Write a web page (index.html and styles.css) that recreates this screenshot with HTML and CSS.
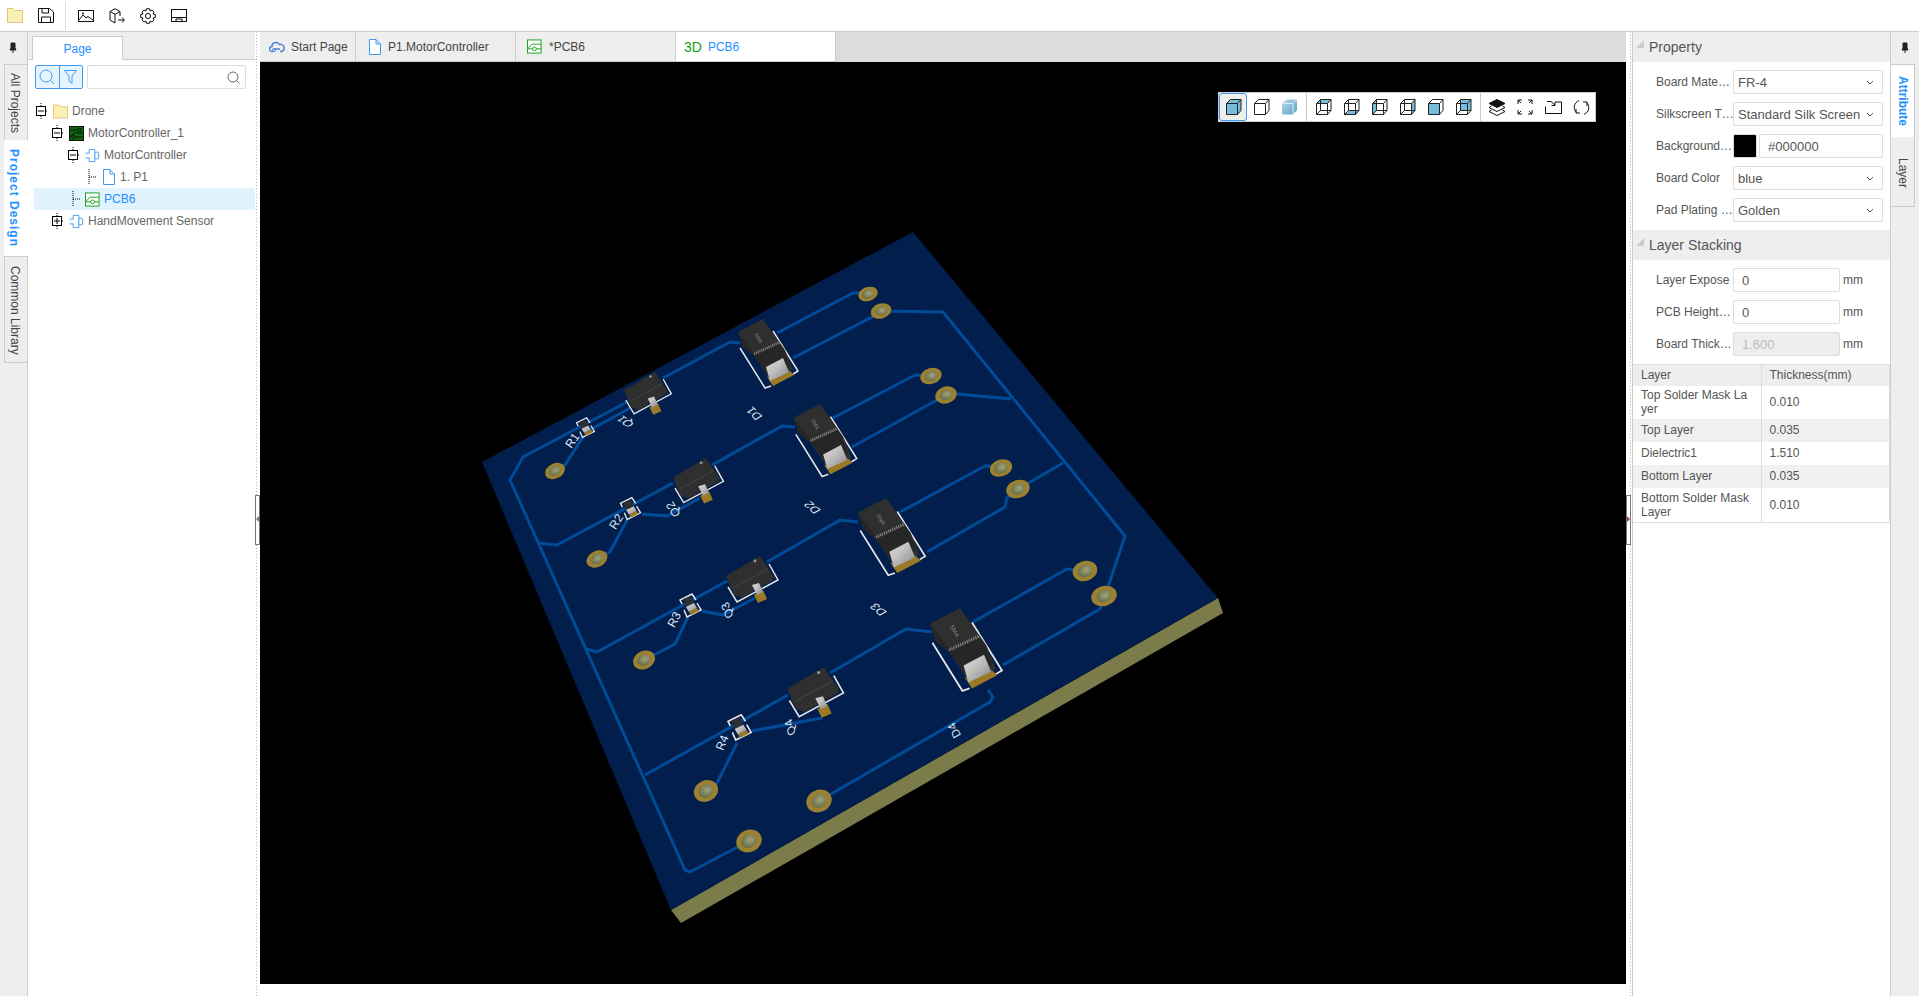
FILE: index.html
```html
<!DOCTYPE html>
<html lang="en">

<head>
    <meta charset="UTF-8">
    <title>PCB6 - 3D View</title>
    <link rel="stylesheet" href="styles.css">
</head>

<body>
    <svg class="defs" width="0" height="0">
        <defs>
            <symbol id="i-doc" viewBox="0 0 13 16">
                <path d="M1.5 .5H8L12.5 5V15.5H1.5Z M8 .5V5H12.5" fill="#fff" stroke="#3f9bf2"/>
            </symbol>
            <symbol id="i-chip" viewBox="0 0 16 16">
                <path d="M4.5 5.5V1.5H10.5V14.5H4.5V10.5M.5 5.5H4.5M.5 10.5H4.5" fill="none" stroke="#3f9bf2"/>
                <rect x="10.5" y="4.5" width="4" height="7" rx="1" fill="#fff" stroke="#3f9bf2"/>
            </symbol>
            <symbol id="i-pcb" viewBox="0 0 16 16">
                <rect x=".5" y="1" width="14.5" height="14" fill="#fff" stroke="#12a012"/>
                <path d="M1 10L5.5 5.5H15M1 10.5H6M10 10.5H15" fill="none" stroke="#12a012"/>
                <circle cx="8" cy="10.5" r="2" fill="none" stroke="#12a012"/>
            </symbol>
            <symbol id="i-folder" viewBox="0 0 16 15">
                <path d="M.5 14.5V.5H6L8 2.5H15.5V14.5Z" fill="#faf0b4" stroke="#dfc477"/>
            </symbol>
            <symbol id="i-minus" viewBox="0 0 14 16">
                <path d="M7 0V3M7 13V16M12 8H14" stroke="#000" stroke-dasharray="1 1" fill="none"/>
                <rect x="2.5" y="3.5" width="9" height="9" fill="#fff" stroke="#000"/>
                <path d="M4 8H10" stroke="#000"/>
            </symbol>
            <symbol id="i-plus" viewBox="0 0 14 16">
                <path d="M7 0V3M7 13V16M12 8H14" stroke="#000" stroke-dasharray="1 1" fill="none"/>
                <rect x="2.5" y="3.5" width="9" height="9" fill="#fff" stroke="#000"/>
                <path d="M4 8H10M7 5V11" stroke="#000"/>
            </symbol>
            <symbol id="i-leaf" viewBox="0 0 14 16">
                <path d="M7 0V16M7 8H14" stroke="#000" stroke-dasharray="1 1" fill="none"/>
            </symbol>
            <symbol id="i-pin" viewBox="0 0 10 12">
                <path d="M3 1H7V6L8 8H2L3 6ZM5 8V11" fill="#222" stroke="#222"/>
            </symbol>
            <symbol id="i-chevron" viewBox="0 0 8 5">
                <path d="M1 1L4 4L7 1" fill="none" stroke="#555"/>
            </symbol>
            <symbol id="i-wire" viewBox="0 0 17 16">
                <path d="M1.5 4.5H12.5V15.5H1.5ZM5.5 .5H16V11.5H12.5M1.5 4.5L5.5 .5V11.5H12.5M12.5 4.5L16 .5M1.5 15.5L5.5 11.5M12.5 15.5L16 11.5" fill="none" stroke="#222"/>
            </symbol>
            <symbol id="i-solid" viewBox="0 0 17 16">
                <path d="M1.5 4.5H12.5V15.5H1.5ZM1.5 4.5L5.5 .5H16V11.5L12.5 15.5M12.5 4.5L16 .5" fill="none" stroke="#222"/>
            </symbol>

            <linearGradient id="g-cube" x1="0" y1="0" x2="1" y2="1">
                <stop offset="0" stop-color="#b7dced"/>
                <stop offset="1" stop-color="#5c9fc2"/>
            </linearGradient>
            <radialGradient id="g-hole" cx=".6" cy=".45" r=".7">
                <stop offset="0" stop-color="#a3a47a"/>
                <stop offset="1" stop-color="#5c6440"/>
            </radialGradient>
            <linearGradient id="g-lead" x1="0" y1="0" x2="1" y2="1">
                <stop offset="0" stop-color="#d8d8d8"/>
                <stop offset=".4" stop-color="#c4c4c4"/>
                <stop offset="1" stop-color="#858585"/>
            </linearGradient>

            <g id="part-d">
                <path class="silk" d="M-23 29L2 69L8 67M10 12L35 52L30 55"/>
                <polygon class="gold" points="4,58 26,51 31,56 10,67"/>
                <polygon class="body" points="-25,13 0,0 22,31 30,51 6,59 2,53 -8,38 -20,28"/>
                <polygon class="body-dark" points="-25,13 -9,34 -4,44 2,53 -8,38 -20,28"/>
                <polygon class="body-dark" points="-9,37 17,25 21,31 27,47 6,57 -4,44"/>
                <path class="stripe" d="M-9 35L17 23"/>
                <polygon points="3,48 20,39 26,53 7,62" fill="url(#g-lead)"/>
                <text class="mark" transform="translate(-6 20) rotate(60)">SMA</text>
            </g>
            <g id="part-q">
                <path class="silk" d="M-32 31L-23 46L18 24L9 8"/>
                <polygon class="body" points="-34,20 0,0 14,21 13,24 -18,42 -27,38"/>
                <path class="ridge" d="M-27 32L8 13"/>
                <circle cx="-5" cy="5" r="1.4" fill="#999"/>
                <polygon class="gold" points="-6,39 3,34 7,43 -2,47"/>
                <polygon points="-8,29 -1,27 3,36 -3,39" fill="url(#g-lead)"/>
            </g>
            <g id="part-r">
                <path class="silk" d="M-8 -2L-10 -6L2 -12L6 -6M-6 4L-3 11L11 4L7 -3"/>
                <polygon class="body" points="-7,-7 1,-9 4,-3 -4,1"/>
                <polygon points="-4,1 4,-3 7,2 -1,6" fill="url(#g-lead)"/>
                <polygon class="gold" points="-1,6 7,2 9,5 1,9"/>
            </g>
        </defs>
    </svg>

    <header class="topbar">
        <svg class="top-icon" width="16" height="15"><use href="#i-folder"/></svg>
        <svg class="top-icon" width="16" height="15" viewBox="0 0 16 15">
            <path d="M.5 .5H11.5L15.5 4V14.5H.5ZM4 .5V5H10.5V.5M3.5 14.5V9H12.5V14.5" fill="none" stroke="#111"/>
        </svg>
        <span class="top-sep"></span>
        <svg class="top-icon" width="16" height="12" viewBox="0 0 16 12">
            <rect x=".5" y=".5" width="15" height="11" fill="none" stroke="#111"/>
            <path d="M1 10L5 5L8 8L10 6.5L15 10" fill="none" stroke="#111"/>
            <circle cx="5" cy="3.5" r="1" fill="#111"/>
        </svg>
        <svg class="top-icon" width="16" height="16" viewBox="0 0 16 16">
            <path d="M1 3.5L6 .7L11 3.5V8M1 3.5V12L6 15V6.3L1 3.5M6 6.3L11 3.5M9 12H15M13 9.5L15.5 12L13 14.5" fill="none" stroke="#111"/>
        </svg>
        <svg class="top-icon" width="16" height="16" viewBox="0 0 16 16">
            <path d="M6.5 .7H9.5L10 3L12 2L14 4L13 6L15.3 6.5V9.5L13 10L14 12L12 14L10 13L9.5 15.3H6.5L6 13L4 14L2 12L3 10L.7 9.5V6.5L3 6L2 4L4 2L6 3Z" fill="none" stroke="#111"/>
            <circle cx="8" cy="8" r="2.6" fill="none" stroke="#111"/>
        </svg>
        <svg class="top-icon" width="16" height="13" viewBox="0 0 16 13">
            <rect x=".5" y=".5" width="15" height="12" fill="none" stroke="#111"/>
            <path d="M1 8.5H15M5 12V10H11V12" fill="none" stroke="#111"/>
        </svg>
    </header>

    <div class="main">
        <aside class="rail">
            <div class="pin"><svg width="10" height="12"><use href="#i-pin"/></svg></div>
            <div class="rail-tab all-tab">All Projects</div>
            <div class="rail-tab active design-tab">Project Design</div>
            <div class="rail-tab common-tab">Common Library</div>
        </aside>

        <section class="project">
            <div class="page-tabs">
                <div class="page-tab">Page</div>
            </div>
            <div class="search-row">
                <div class="search-btns">
                    <span class="search-btn">
                        <svg width="16" height="16" viewBox="0 0 16 16">
                            <circle cx="7" cy="7" r="6" fill="none" stroke="#3f9bf2"/>
                            <path d="M11.5 11.5L15 15" stroke="#3f9bf2"/>
                        </svg>
                    </span>
                    <span class="search-btn">
                        <svg width="13" height="14" viewBox="0 0 13 14">
                            <path d="M.5 .5H12.5L8 6V13.5L5 11V6Z" fill="none" stroke="#3f9bf2"/>
                        </svg>
                    </span>
                </div>
                <div class="search-box">
                    <svg width="13" height="13" viewBox="0 0 13 13">
                        <circle cx="6" cy="6" r="5" fill="none" stroke="#666"/>
                        <path d="M9.5 9.5L12.5 12.5" stroke="#666"/>
                    </svg>
                </div>
            </div>
            <div class="tree">
                <div class="row lv0"><svg class="sw" width="14" height="16"><use href="#i-minus"/></svg><svg class="ico" width="15" height="15"><use href="#i-folder"/></svg>Drone</div>
                <div class="row lv1"><svg class="sw" width="14" height="16"><use href="#i-minus"/></svg>
                    <svg class="ico" width="15" height="15" viewBox="0 0 15 15">
                        <rect x=".5" y=".5" width="14" height="14" fill="#0b6b0b" stroke="#111"/>
                        <path d="M1 4H9M6 11H14M1 11L5 7H14" fill="none" stroke="#111"/>
                        <circle cx="10.5" cy="4" r="1.7" fill="none" stroke="#111"/>
                        <circle cx="4.5" cy="11" r="1.7" fill="none" stroke="#111"/>
                    </svg>MotorController_1</div>
                <div class="row lv2"><svg class="sw" width="14" height="16"><use href="#i-minus"/></svg><svg class="ico" width="15" height="15"><use href="#i-chip"/></svg>MotorController</div>
                <div class="row lv3"><svg class="sw" width="14" height="16"><use href="#i-leaf"/></svg><svg class="ico" width="15" height="16"><use href="#i-doc"/></svg>1. P1</div>
                <div class="row lv2 selected"><svg class="sw" width="14" height="16"><use href="#i-leaf"/></svg><svg class="ico" width="15" height="15"><use href="#i-pcb"/></svg>PCB6</div>
                <div class="row lv1"><svg class="sw" width="14" height="16"><use href="#i-plus"/></svg><svg class="ico" width="15" height="15"><use href="#i-chip"/></svg>HandMovement Sensor</div>
            </div>
        </section>

        <div class="splitter"><span class="handle left-handle"></span></div>

        <section class="center">
            <nav class="doc-tabs">
                <div class="doc-tab tab-start">
                    <svg width="16" height="12" viewBox="0 0 16 12">
                        <path d="M4 10.5H3A2.5 2.5 0 0 1 3 5.5A4 4 0 0 1 10.5 3.5A3.5 3.5 0 0 1 12.5 10.5H11M5 8H11" fill="none" stroke="#4d7fe0" stroke-width="1.5"/>
                        <circle cx="5" cy="9" r="1.5" fill="none" stroke="#4d7fe0"/>
                    </svg>Start Page</div>
                <div class="doc-tab tab-sch"><svg width="13" height="16"><use href="#i-doc"/></svg>P1.MotorController</div>
                <div class="doc-tab tab-pcb"><svg width="15" height="15"><use href="#i-pcb"/></svg>*PCB6</div>
                <div class="doc-tab tab-3d active"><span class="badge-3d">3D</span>PCB6</div>
            </nav>
            <div class="canvas">
                <svg class="scene" viewBox="260 62 1366 922" width="1366" height="922">
                    <polygon class="board-side" points="671,910 1218,598 1223,613 681,923"/>
                    <polygon class="board-top" points="913,232 1218,598 671,910 482,462"/>

                    <g class="traces">
                        <polyline points="868,293 853,293 777,333"/>
                        <polyline points="881,311 872,317 793,358"/>
                        <polyline points="881,311 943,312 1125,536 1107,590"/>
                        <polyline points="740,343 730,342 663,378"/>
                        <polyline points="627,402 523,457 510,480 685,870 690,872 749,841"/>
                        <polyline points="630,408 590,430"/>
                        <polyline points="583,437 565,465 555,471"/>
                        <polyline points="795,427 782,426 712,465"/>
                        <polyline points="673,483 557,545 538,543"/>
                        <polyline points="700,498 667,516 642,514"/>
                        <polyline points="627,520 610,552 597,559"/>
                        <polyline points="931,376 915,375 833,418"/>
                        <polyline points="946,395 852,447"/>
                        <polyline points="946,393 1011,399"/>
                        <polyline points="1001,467 985,466 900,512"/>
                        <polyline points="1018,489 1007,498 1005,507 927,552"/>
                        <polyline points="1018,489 1063,463"/>
                        <polyline points="858,522 840,520 767,562"/>
                        <polyline points="727,581 597,652 586,649"/>
                        <polyline points="755,598 723,615 702,611"/>
                        <polyline points="688,617 675,644 644,660"/>
                        <polyline points="1085,571 1067,569 973,622"/>
                        <polyline points="1104,596 1100,609 1003,665"/>
                        <polyline points="932,632 906,629 830,673"/>
                        <polyline points="788,695 645,775"/>
                        <polyline points="988,690 993,697 990,702 819,801"/>
                        <polyline points="822,718 752,731"/>
                        <polyline points="737,743 717,783 706,791"/>
                    </g>

                    <g class="labels">
                        <text transform="translate(573 441) rotate(-55)">R1</text>
                        <text transform="translate(617 522) rotate(-58)">R2</text>
                        <text transform="translate(675 620) rotate(-62)">R3</text>
                        <text transform="translate(723 743) rotate(-68)">R4</text>
                        <text transform="matrix(-.8 -.55 .85 -.5 626 421)">Q1</text>
                        <text transform="matrix(-.55 -.83 .85 -.5 674 509)">Q2</text>
                        <text transform="matrix(-.37 -.93 .85 -.5 728 610)">Q3</text>
                        <text transform="matrix(-.3 -.95 .85 -.5 791 727)">Q4</text>
                        <text transform="matrix(-.7 -.7 .85 -.5 755 413)">D1</text>
                        <text transform="matrix(-.75 -.62 .85 -.5 813 507)">D2</text>
                        <text transform="matrix(-.75 -.62 .85 -.5 879 609)">D3</text>
                        <text transform="matrix(-.45 -.89 .85 -.5 955 730)">D4</text>
                    </g>

                    <g class="pads">
                        <g transform="translate(868 294) rotate(-18)"><ellipse rx="10" ry="7"/><ellipse class="hole" rx="6" ry="4.5"/></g>
                        <g transform="translate(881 311) rotate(-18)"><ellipse rx="10.5" ry="7.5"/><ellipse class="hole" rx="6" ry="4.5"/></g>
                        <g transform="translate(931 376) rotate(-18)"><ellipse rx="11" ry="8"/><ellipse class="hole" rx="6.5" ry="5"/></g>
                        <g transform="translate(946 395) rotate(-18)"><ellipse rx="11" ry="8.5"/><ellipse class="hole" rx="6.5" ry="5"/></g>
                        <g transform="translate(1001 468) rotate(-18)"><ellipse rx="11.5" ry="8.5"/><ellipse class="hole" rx="7" ry="5.5"/></g>
                        <g transform="translate(1018 489) rotate(-18)"><ellipse rx="12" ry="9"/><ellipse class="hole" rx="7" ry="5.5"/></g>
                        <g transform="translate(1085 571) rotate(-18)"><ellipse rx="12.5" ry="10"/><ellipse class="hole" rx="7.5" ry="6"/></g>
                        <g transform="translate(1104 596) rotate(-18)"><ellipse rx="13" ry="10"/><ellipse class="hole" rx="7.5" ry="6"/></g>
                        <g transform="translate(555 471) rotate(-25)"><ellipse rx="10.5" ry="7.5"/><ellipse class="hole" rx="6.5" ry="4.5"/></g>
                        <g transform="translate(597 559) rotate(-25)"><ellipse rx="11" ry="8"/><ellipse class="hole" rx="6.5" ry="5"/></g>
                        <g transform="translate(644 660) rotate(-25)"><ellipse rx="11.5" ry="9"/><ellipse class="hole" rx="7" ry="5.5"/></g>
                        <g transform="translate(706 791) rotate(-25)"><ellipse rx="12.5" ry="10.5"/><ellipse class="hole" rx="7.5" ry="6.5"/></g>
                        <g transform="translate(819 801) rotate(-25)"><ellipse rx="13" ry="11"/><ellipse class="hole" rx="8" ry="6.5"/></g>
                        <g transform="translate(749 841) rotate(-25)"><ellipse rx="13" ry="11"/><ellipse class="hole" rx="8" ry="6.5"/></g>
                    </g>

                    <use href="#part-r" transform="translate(585 428) scale(.85)"/>
                    <use href="#part-r" transform="translate(630 509) scale(.95)"/>
                    <use href="#part-r" transform="translate(690 606)"/>
                    <use href="#part-r" transform="translate(739 728) scale(1.1)"/>
                    <use href="#part-q" transform="translate(655 372) scale(.91)"/>
                    <use href="#part-q" transform="translate(706 458) scale(.97)"/>
                    <use href="#part-q" transform="translate(760 556)"/>
                    <use href="#part-q" transform="translate(824 667) scale(1.08)"/>
                    <use href="#part-d" transform="translate(763 319)"/>
                    <use href="#part-d" transform="translate(820 404) scale(1.05)"/>
                    <use href="#part-d" transform="translate(886 498) scale(1.12)"/>
                    <use href="#part-d" transform="translate(960 608) scale(1.2)"/>
                </svg>

                <div class="view-tools">
                    <span class="tool selected"><svg width="17" height="16" viewBox="0 0 17 16"><polygon class="shade" points="1.5,4.5 5.5,.5 16,.5 16,11.5 12.5,15.5 1.5,15.5"/><use href="#i-solid" width="17" height="16"/></svg></span>
                    <span class="tool"><svg width="17" height="16"><use href="#i-solid"/></svg></span>
                    <span class="tool">
                        <svg width="17" height="16" viewBox="0 0 17 16">
                            <path d="M1 4.5L5.5 .5H16V11L12 15.5H1Z" fill="url(#g-cube)"/>
                            <path d="M1 4.5H12V15.5M12 4.5L16 .5" fill="none" stroke="#d8edf6"/>
                        </svg>
                    </span>
                    <span class="tool-sep"></span>
                    <span class="tool"><svg width="17" height="16" viewBox="0 0 17 16"><polygon class="shade" points="1.5,4.5 5.5,.5 16,.5 12.5,4.5"/><use href="#i-wire" width="17" height="16"/></svg></span>
                    <span class="tool"><svg width="17" height="16" viewBox="0 0 17 16"><polygon class="shade" points="1.5,15.5 5.5,11.5 16,11.5 12.5,15.5"/><use href="#i-wire" width="17" height="16"/></svg></span>
                    <span class="tool"><svg width="17" height="16" viewBox="0 0 17 16"><polygon class="shade" points="1.5,4.5 5.5,.5 5.5,11.5 1.5,15.5"/><use href="#i-wire" width="17" height="16"/></svg></span>
                    <span class="tool"><svg width="17" height="16" viewBox="0 0 17 16"><polygon class="shade" points="12.5,4.5 16,.5 16,11.5 12.5,15.5"/><use href="#i-wire" width="17" height="16"/></svg></span>
                    <span class="tool"><svg width="17" height="16" viewBox="0 0 17 16"><rect class="shade" x="1.5" y="4.5" width="11" height="11"/><use href="#i-solid" width="17" height="16"/></svg></span>
                    <span class="tool"><svg width="17" height="16" viewBox="0 0 17 16"><rect class="shade" x="5.5" y=".5" width="10.5" height="11"/><use href="#i-wire" width="17" height="16"/></svg></span>
                    <span class="tool-sep"></span>
                    <span class="tool">
                        <svg width="18" height="17" viewBox="0 0 18 17">
                            <path d="M9 .5L17 4.5L9 8.5L1 4.5Z" fill="#111" stroke="#111"/>
                            <path d="M3.5 7L1 8.5L9 12.5L17 8.5L14.5 7M3.5 11L1 12.5L9 16.5L17 12.5L14.5 11" fill="none" stroke="#111"/>
                        </svg>
                    </span>
                    <span class="tool">
                        <svg width="16" height="16" viewBox="0 0 16 16">
                            <path d="M1 5V1H5M11 1H15V5M15 11V15H11M5 15H1V11M1 1L4 4M15 1L12 4M15 15L12 12M1 15L4 12" fill="none" stroke="#111"/>
                        </svg>
                    </span>
                    <span class="tool">
                        <svg width="17" height="14" viewBox="0 0 17 14">
                            <path d="M.5 6.5V13.5H16.5V2H10M2 1.5H6L10 5M10 2V5.5H6.5" fill="none" stroke="#111"/>
                        </svg>
                    </span>
                    <span class="tool">
                        <svg width="17" height="17" viewBox="0 0 17 17">
                            <path d="M6 1.7A7 7 0 0 0 3.5 13.5M11 15.3A7 7 0 0 0 13.5 3.5M3 10V14H7M14 7V3H10" fill="none" stroke="#111"/>
                        </svg>
                    </span>
                </div>
            </div>
        </section>

        <div class="splitter right"><span class="handle right-handle"></span></div>

        <section class="props">
            <h3 class="section"><span class="caret"></span>Property</h3>
            <div class="form">
                <div class="field"><label>Board Mate…</label><div class="select">FR-4<svg width="8" height="5"><use href="#i-chevron"/></svg></div></div>
                <div class="field"><label>Silkscreen T…</label><div class="select">Standard Silk Screen<svg width="8" height="5"><use href="#i-chevron"/></svg></div></div>
                <div class="field"><label>Background…</label><span class="swatch"></span><input class="text hex" type="text" value="#000000"></div>
                <div class="field"><label>Board Color</label><div class="select">blue<svg width="8" height="5"><use href="#i-chevron"/></svg></div></div>
                <div class="field"><label>Pad Plating …</label><div class="select">Golden<svg width="8" height="5"><use href="#i-chevron"/></svg></div></div>
            </div>
            <h3 class="section"><span class="caret"></span>Layer Stacking</h3>
            <div class="form">
                <div class="field"><label>Layer Expose</label><input class="text num" type="text" value="0"><span class="unit">mm</span></div>
                <div class="field"><label>PCB Height…</label><input class="text num" type="text" value="0"><span class="unit">mm</span></div>
                <div class="field"><label>Board Thick…</label><input class="text num" type="text" value="1.600" disabled><span class="unit">mm</span></div>
            </div>
            <table class="layers">
                <thead>
                    <tr><th>Layer</th><th>Thickness(mm)</th></tr>
                </thead>
                <tbody>
                    <tr class="tall"><td>Top Solder Mask Layer</td><td>0.010</td></tr>
                    <tr class="alt"><td>Top Layer</td><td>0.035</td></tr>
                    <tr><td>Dielectric1</td><td>1.510</td></tr>
                    <tr class="alt"><td>Bottom Layer</td><td>0.035</td></tr>
                    <tr class="tall last"><td>Bottom Solder Mask Layer</td><td>0.010</td></tr>
                </tbody>
            </table>
        </section>

        <aside class="rail-right">
            <div class="pin"><svg width="10" height="12"><use href="#i-pin"/></svg></div>
            <div class="side-tab active attr-tab">Attribute</div>
            <div class="side-tab layer-tab">Layer</div>
        </aside>
    </div>
</body>

</html>
```

FILE: styles.css
```css
* {
    box-sizing: border-box;
}

html,
body {
    margin: 0;
    height: 100%;
    overflow: hidden;
}

body {
    font-family: "Liberation Sans", Arial, sans-serif;
    font-size: 12px;
    color: #555;
    background-color: #fff;
    display: flex;
    flex-direction: column;
}

.defs {
    display: block;
    height: 0;
}

/* top bar */
.topbar {
    height: 32px;
    flex: none;
    display: flex;
    align-items: center;
    padding-left: 7px;
    border-bottom: 1px solid #ccc;
}

.top-icon {
    margin-right: 15px;
    flex: none;
}

.top-sep {
    width: 1px;
    height: 28px;
    background-color: #ddd;
    margin: 0 12px 0 -4px;
}

.main {
    flex: 1;
    display: flex;
    min-height: 0;
}

/* left rail */
.rail {
    width: 28px;
    flex: none;
    background-color: #eee;
    border-right: 1px solid #ccc;
    display: flex;
    flex-direction: column;
    align-items: flex-end;
}

.pin {
    height: 32px;
    width: 100%;
    display: flex;
    justify-content: center;
    align-items: center;
}

.rail .pin {
    padding-right: 2px;
}

.rail-tab {
    writing-mode: vertical-rl;
    width: 24px;
    margin-right: -1px;
    padding-right: 4px;
    border: 1px solid #ccc;
    border-right: none;
    border-bottom: none;
    color: #444;
    display: flex;
    align-items: center;
    line-height: 14px;
}

.all-tab {
    height: 76px;
    padding-top: 8px;
}

.design-tab {
    height: 116px;
    padding-top: 9px;
    letter-spacing: 1px;
}

.common-tab {
    height: 107px;
    padding-top: 9px;
    border-bottom: 1px solid #ccc;
}

.rail-tab.active {
    background-color: #fff;
    color: #1e90ff;
    font-weight: bold;
    border-left: none;
    border-top: none;
}

/* project tree */
.project {
    width: 227px;
    flex: none;
    display: flex;
    flex-direction: column;
}

.page-tabs {
    height: 28px;
    flex: none;
    background-color: #eee;
    border-bottom: 1px solid #ccc;
    padding: 4px 0 0 4px;
}

.page-tab {
    width: 91px;
    height: 24px;
    background-color: #fff;
    border: 1px solid #ccc;
    border-bottom: none;
    color: #1e90ff;
    text-align: center;
    line-height: 25px;
}

.search-row {
    display: flex;
    gap: 4px;
    padding: 5px 0 0 7px;
}

.search-btns {
    display: flex;
    width: 48px;
    height: 24px;
    border: 1px solid #3f9bf2;
    border-radius: 2px;
    background-color: #e6f4fd;
}

.search-btn {
    flex: 1;
    display: flex;
    align-items: center;
    justify-content: center;
}

.search-btn + .search-btn {
    border-left: 1px solid #3f9bf2;
}

.search-box {
    width: 159px;
    height: 24px;
    border: 1px solid #ddd;
    border-radius: 2px;
    display: flex;
    align-items: center;
    justify-content: flex-end;
    padding-right: 5px;
}

.tree {
    padding-top: 11px;
}

.row {
    height: 22px;
    margin-left: 6px;
    display: flex;
    align-items: center;
    color: #666;
    white-space: nowrap;
}

.lv1 {
    padding-left: 16px;
}

.lv2 {
    padding-left: 32px;
}

.lv3 {
    padding-left: 48px;
}

.row.selected {
    background-color: #e1f3fd;
    color: #1e90ff;
}

.sw {
    flex: none;
}

.ico {
    flex: none;
    margin: 0 4px 0 5px;
}

/* splitters */
.splitter {
    width: 5px;
    flex: none;
    position: relative;
    background-image: linear-gradient(#bbb 50%, transparent 50%);
    background-size: 1px 3px;
    background-repeat: repeat-y;
    background-position: 1px 0;
}

.splitter.right {
    width: 6px;
    background-position: 4px 0;
}

.handle {
    position: absolute;
    top: 463px;
    width: 5px;
    height: 50px;
    border: 1px solid #777;
    background-color: #fff;
}

.left-handle {
    right: 0;
}

.right-handle {
    left: 0;
}

.handle::after {
    content: "";
    position: absolute;
    top: 20px;
    left: 0;
    border: 3px solid transparent;
}

.left-handle::after {
    border-right-color: #777;
    left: -3px;
}

.right-handle::after {
    border-left-color: #8c4a4a;
}

/* center */
.center {
    flex: 1;
    min-width: 0;
    display: flex;
    flex-direction: column;
    padding-bottom: 12px;
}

.doc-tabs {
    height: 30px;
    flex: none;
    display: flex;
    background-color: #dcdcdc;
}

.doc-tab {
    width: 160px;
    display: flex;
    align-items: center;
    gap: 7px;
    padding-left: 11px;
    background-color: #eee;
    border-right: 1px solid #ccc;
    border-bottom: 1px solid #ccc;
    color: #444;
}

.tab-start {
    width: 96px;
    padding-left: 9px;
}

.tab-start svg {
    margin-right: -1px;
}

.tab-sch {
    padding-left: 12px;
}

.tab-pcb {
    padding-left: 11px;
}

.doc-tab.active {
    background-color: #fff;
    color: #1e90ff;
    padding-left: 8px;
    gap: 6px;
}

.badge-3d {
    color: #12a012;
    font-size: 14px;
}

.canvas {
    flex: 1;
    position: relative;
    background-color: #000;
    overflow: hidden;
}

.scene {
    display: block;
}

.board-top {
    fill: #011e4d;
}

.board-side {
    fill: #7c7c4b;
}

.traces polyline {
    fill: none;
    stroke: #004c98;
    stroke-width: 3;
    stroke-linejoin: round;
}

.labels text {
    fill: #dfe5ee;
    font-size: 12px;
    text-anchor: middle;
    dominant-baseline: middle;
}

.pads ellipse {
    fill: #9c8130;
}

.pads .hole {
    fill: url(#g-hole);
}

.silk {
    fill: none;
    stroke: #e6e6e6;
    stroke-width: 1.5;
}

.body {
    fill: #2f2f2f;
}

.body-dark {
    fill: #262626;
}

.gold {
    fill: #9a7a26;
}

.stripe {
    fill: none;
    stroke: #8a8a8a;
    stroke-width: 2.5;
    stroke-dasharray: 1 1;
}

.ridge {
    stroke: #444;
    fill: none;
}

.mark {
    fill: #888;
    font-size: 5px;
    text-anchor: middle;
}

/* 3d view tools */
.view-tools {
    position: absolute;
    top: 30px;
    right: 30px;
    height: 30px;
    width: 378px;
    display: flex;
    align-items: center;
    background-color: #fff;
    border: 1px solid #ccc;
}

.tool {
    width: 28px;
    height: 28px;
    display: flex;
    align-items: center;
    justify-content: center;
    flex: none;
    border: 1px solid transparent;
    border-radius: 3px;
}

.tool.selected {
    border-color: #3f9bf2;
    background-color: #eee;
}

.tool-sep {
    width: 1px;
    height: 28px;
    background-color: #ccc;
    margin: 0 2px 0 3px;
    flex: none;
}

.shade {
    fill: #78bcdc;
}

/* properties */
.props {
    width: 259px;
    flex: none;
    border-left: 1px solid #ccc;
    border-right: 1px solid #ccc;
    display: flex;
    flex-direction: column;
}

.section {
    height: 30px;
    flex: none;
    margin: 0;
    background-color: #eee;
    font-size: 14px;
    font-weight: normal;
    color: #555;
    line-height: 30px;
    padding-left: 16px;
    position: relative;
}

.caret {
    position: absolute;
    left: 3px;
    top: 8px;
    border-style: solid;
    border-width: 0 0 8px 8px;
    border-color: transparent transparent #ccc transparent;
}

.form {
    padding: 8px 0 0;
}

.field {
    height: 24px;
    margin-bottom: 8px;
    display: flex;
    align-items: center;
    padding-left: 23px;
}

.field label {
    width: 77px;
    flex: none;
    white-space: nowrap;
    overflow: hidden;
    color: #555;
    margin-top: -1px;
}

.select {
    width: 150px;
    height: 24px;
    border: 1px solid #ddd;
    border-radius: 2px;
    font-size: 13px;
    color: #555;
    padding: 0 8px 0 4px;
    display: flex;
    align-items: center;
    justify-content: space-between;
}

.swatch {
    width: 24px;
    height: 24px;
    background-color: #000;
    border: 1px solid #ddd;
    border-radius: 2px;
    flex: none;
}

.text {
    height: 24px;
    font: 13px "Liberation Sans", Arial, sans-serif;
    color: #555;
    border: 1px solid #ddd;
    border-radius: 2px;
    padding: 0 8px;
    outline: none;
}

.hex {
    width: 124px;
    margin-left: 2px;
}

.num {
    width: 107px;
}

.num:disabled {
    background-color: #eee;
    color: #bbb;
}

.unit {
    margin-left: 3px;
    color: #555;
}

.layers {
    width: 257px;
    border-collapse: collapse;
    table-layout: fixed;
    border: 1px solid #ddd;
    border-width: 1px 0;
    border-right: 1px solid #ddd;
    color: #555;
}

.layers th {
    height: 21px;
    background-color: #eee;
    font-weight: normal;
    text-align: left;
    padding: 0 8px;
}

.layers td {
    height: 23px;
    padding: 0 8px;
    line-height: 14px;
    word-break: break-all;
}

.layers tr.tall td {
    height: 33px;
}

.layers tr.last td {
    height: 35px;
}

.layers tr.alt td {
    background-color: #f0f0f0;
}

.layers th:first-child,
.layers td:first-child {
    width: 128px;
    border-right: 1px solid #ddd;
}

/* right rail */
.rail-right {
    width: 28px;
    flex: none;
    background-color: #eee;
    display: flex;
    flex-direction: column;
    align-items: flex-start;
}

.side-tab {
    writing-mode: vertical-rl;
    width: 24px;
    border: 1px solid #ccc;
    border-left: none;
    border-top: none;
    color: #444;
    display: flex;
    align-items: center;
    padding-left: 1px;
}

.attr-tab {
    height: 73px;
    padding-top: 11px;
}

.layer-tab {
    height: 70px;
    padding-top: 21px;
}

.side-tab.active {
    background-color: #fff;
    color: #1e90ff;
    font-weight: bold;
    border-bottom: none;
    border-top: 1px solid #ccc;
}
```
